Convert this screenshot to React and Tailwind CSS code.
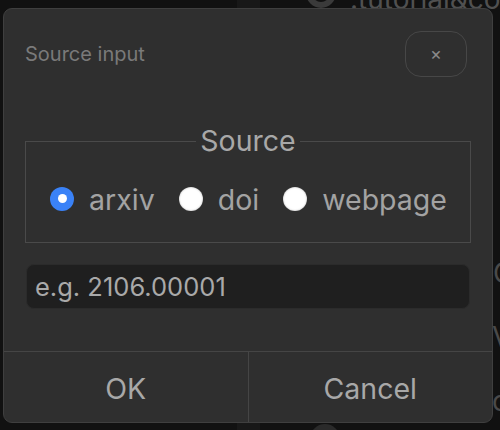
import React from "react";

function Radio({ checked, label }) {
  return (
    <label className="flex items-center gap-[15px]">
      {checked ? (
        <span className="flex h-[24px] w-[24px] items-center justify-center rounded-full bg-[#3a82f7]">
          <span className="h-[9px] w-[9px] rounded-full bg-white" />
        </span>
      ) : (
        <span className="h-[24px] w-[24px] rounded-full bg-white shadow-[inset_0_0_2px_rgba(0,0,0,0.35)]" />
      )}
      <span className="pt-[3px] text-[28.5px] leading-[30px] text-[#a3a3a3]">{label}</span>
    </label>
  );
}

export default function App() {
  return (
    <div
      className="relative h-[430px] w-[500px] overflow-hidden bg-[#111111]"
      style={{ fontFamily: "Inter, 'Noto Sans', sans-serif" }}
    >
      {/* background app glimpses */}
      <div className="absolute left-[237px] top-0 h-[430px] w-[23px] bg-[#181818]" />
      <div className="absolute left-[306px] top-[-22px] h-[30px] w-[30px] rounded-full border-[6px] border-[#3a3a3a]" />
      <div className="absolute left-[350px] top-[-16px] text-[28px] leading-[30px] text-[#505050]">.tutorial&amp;co</div>
      <div className="absolute left-[310px] top-[424px] h-[30px] w-[30px] rounded-full bg-[#2a2a2a]" />
      <div className="absolute left-[493px] top-[258px] text-[28px] leading-[30px] text-[#4a4a4a]">C</div>
      <div className="absolute left-[492px] top-[322px] text-[28px] leading-[30px] text-[#4a4a4a]">V</div>
      <div className="absolute left-[492px] top-[386px] text-[28px] leading-[30px] text-[#4a4a4a]">o</div>

      <div className="relative pl-[3px] pt-[8px]">
        <div className="flex h-[415px] w-[490px] flex-col rounded-[9px] border border-[#3f3f3f] bg-[#2f2f2f]">
          {/* header */}
          <div className="flex items-center justify-between pl-[21px] pr-[25px] pt-[22px]">
            <span className="text-[20px] text-[#7a7a7a]">Source input</span>
            <button className="flex h-[46px] w-[62px] items-center justify-center rounded-[16px] border border-[#474747] text-[18px] leading-none text-[#8a8a8a]">
              ×
            </button>
          </div>

          {/* body */}
          <div className="flex flex-col px-[21px] pt-[49px]">
            <fieldset className="border border-[#4a4a4a] px-0 pb-[27px] pt-[26px]">
              <legend className="mx-auto px-[4px] text-[28.5px] leading-[30px] text-[#a8a8a8]">Source</legend>
              <div className="flex items-center justify-center gap-[24px] pl-[1px]">
                <Radio checked label="arxiv" />
                <Radio label="doi" />
                <Radio label="webpage" />
              </div>
            </fieldset>

            <div className="mx-px mt-[21px] flex h-[45px] items-center rounded-[8px] border border-[#2b2b2b] bg-[#1f1f1f] pl-[8px]">
              <span className="pt-[1px] text-[25.5px] text-[#a9a9a9]">e.g. 2106.00001</span>
            </div>
          </div>

          {/* footer buttons */}
          <div className="mt-auto flex h-[71px] border-t border-[#454545]">
            <button className="flex flex-1 items-center justify-center border-r border-[#454545] pt-[4px] text-[28.5px] text-[#a8a8a8]">
              OK
            </button>
            <button className="flex flex-1 items-center justify-center pt-[4px] text-[28.5px] text-[#a8a8a8]">
              Cancel
            </button>
          </div>
        </div>
      </div>
    </div>
  );
}
